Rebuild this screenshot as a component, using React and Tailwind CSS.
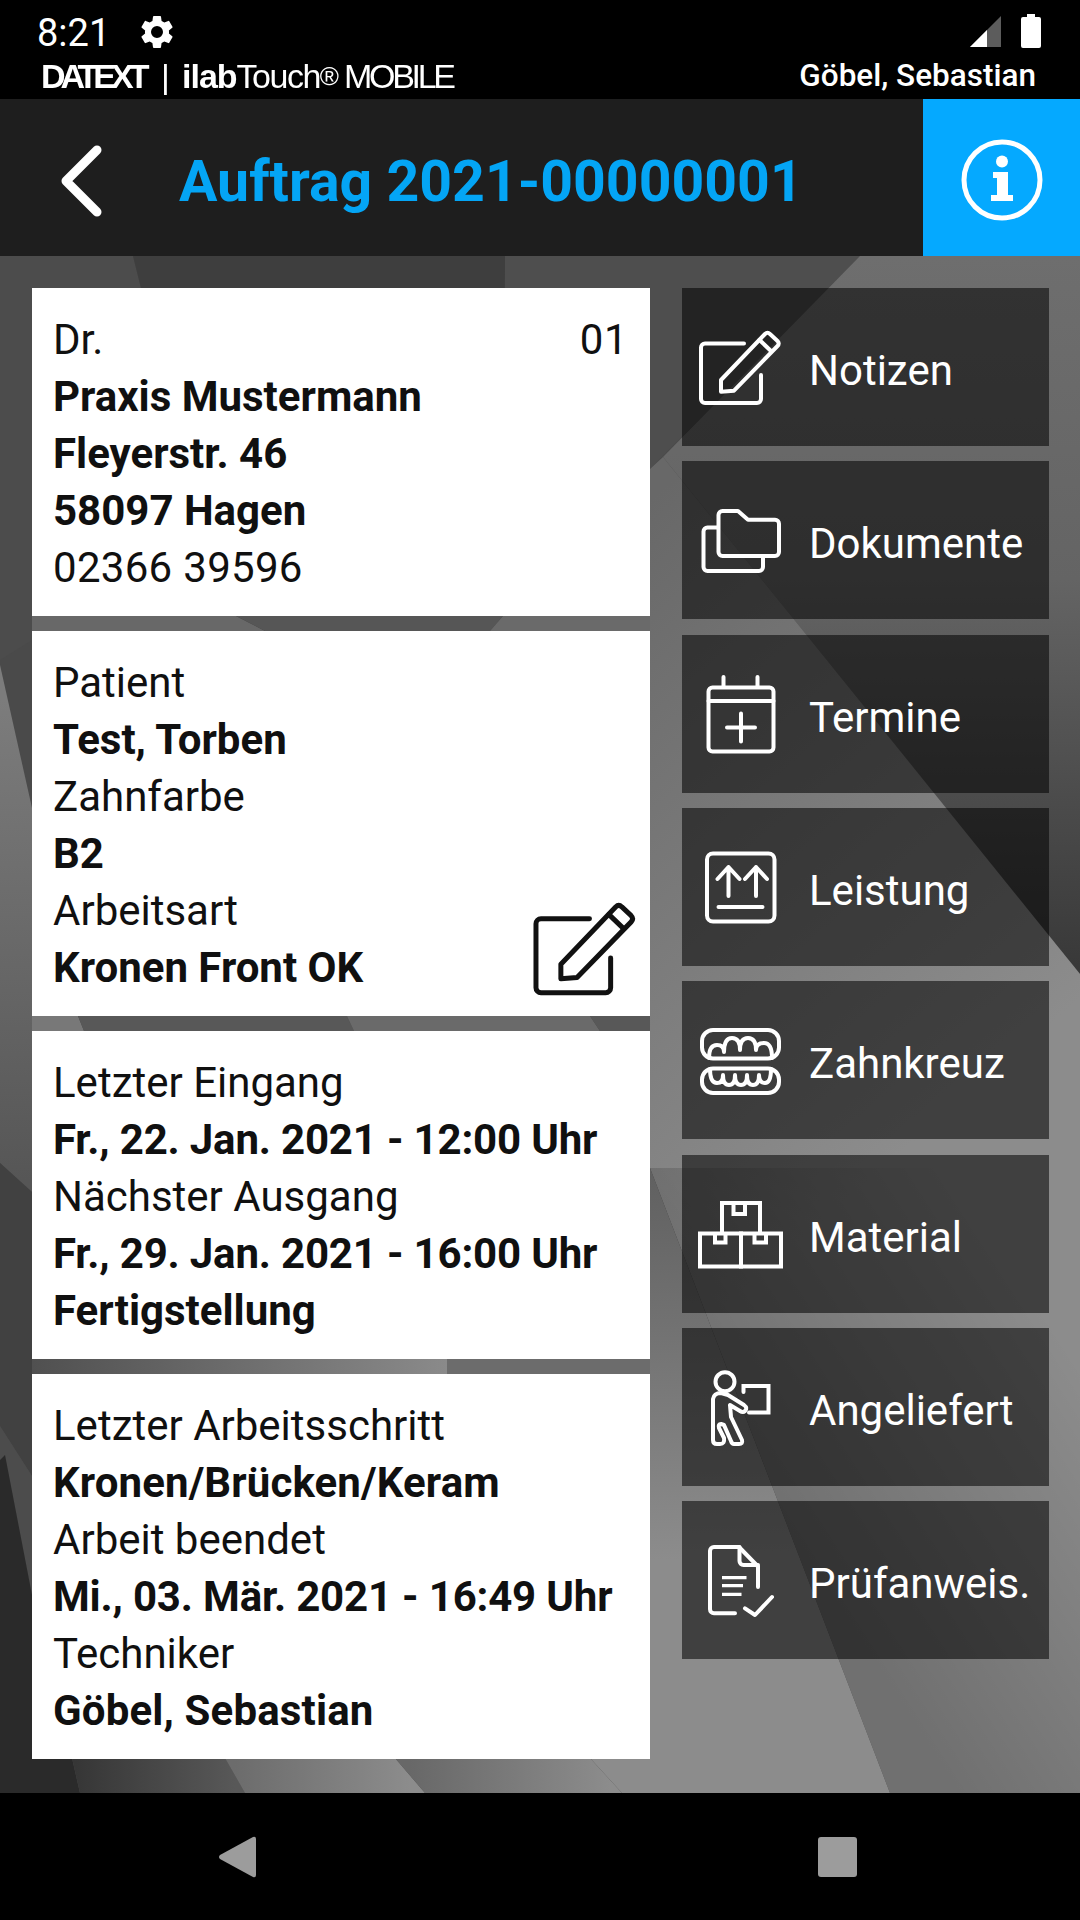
import React from 'react';

const font = { fontFamily: 'Roboto, sans-serif' };

// background picture, coordinates are page pixels minus the 256px of bars on top
const Wallpaper = () => (
  <svg className="absolute inset-0 w-full h-full" viewBox="0 256 1080 1537" preserveAspectRatio="none">
    <defs>
      <linearGradient id="gTopRight" gradientUnits="userSpaceOnUse" x1="0" y1="256" x2="0" y2="974">
        <stop offset="0" stopColor="#6e6e6e" />
        <stop offset="0.45" stopColor="#646464" />
        <stop offset="1" stopColor="#383838" />
      </linearGradient>
      <linearGradient id="gMid" gradientUnits="userSpaceOnUse" x1="650" y1="500" x2="1080" y2="1000">
        <stop offset="0" stopColor="#686868" />
        <stop offset="1" stopColor="#8c8c8c" />
      </linearGradient>
      <linearGradient id="gLow" gradientUnits="userSpaceOnUse" x1="720" y1="1420" x2="1000" y2="1240">
        <stop offset="0" stopColor="#000" stopOpacity="0.2" />
        <stop offset="1" stopColor="#000" stopOpacity="0" />
      </linearGradient>
      <linearGradient id="gE" gradientUnits="userSpaceOnUse" x1="0" y1="1170" x2="0" y2="1560">
        <stop offset="0" stopColor="#606060" />
        <stop offset="1" stopColor="#8c8c8c" />
      </linearGradient>
      <linearGradient id="gWedge" gradientUnits="userSpaceOnUse" x1="0" y1="700" x2="0" y2="1180">
        <stop offset="0" stopColor="#7c7c7c" />
        <stop offset="1" stopColor="#565656" />
      </linearGradient>
      <linearGradient id="gBand1" gradientUnits="userSpaceOnUse" x1="75" y1="0" x2="235" y2="0">
        <stop offset="0" stopColor="#363636" />
        <stop offset="1" stopColor="#585858" />
      </linearGradient>
      <linearGradient id="gBand2" gradientUnits="userSpaceOnUse" x1="235" y1="0" x2="410" y2="0">
        <stop offset="0" stopColor="#6c6c6c" />
        <stop offset="1" stopColor="#8c8c8c" />
      </linearGradient>
      <linearGradient id="gBand3" gradientUnits="userSpaceOnUse" x1="410" y1="0" x2="610" y2="0">
        <stop offset="0" stopColor="#686868" />
        <stop offset="1" stopColor="#8c8c8c" />
      </linearGradient>
      <linearGradient id="gGap3" gradientUnits="userSpaceOnUse" x1="32" y1="0" x2="447" y2="0">
        <stop offset="0" stopColor="#505050" />
        <stop offset="1" stopColor="#8a8a8a" />
      </linearGradient>
    </defs>
    <rect x="0" y="256" width="1080" height="1537" fill="#4a4a4a" />
    <polygon points="0,256 133,256 141,288 236,616 32,640 0,660" fill="#4c4c4c" />
    <polygon points="133,256 505,256 529,288 503,616 490,631 265,631 236,616 141,288" fill="#3e3e3e" />
    <polygon points="505,256 860,256 650,469 650,640 503,631" fill="#4e4e4e" />
    <polygon points="860,256 1080,256 1080,974 663,457" fill="url(#gTopRight)" />
    <polygon points="663,457 1080,974 1080,1793 890,1793 650,1168 650,469" fill="url(#gMid)" />
    <polygon points="650,1168 890,1793 622,1793 590,1758 590,1374 650,1359" fill="url(#gE)" />
    <polygon points="650,1168 1080,1168 1080,1793 890,1793" fill="url(#gLow)" />
    {/* gaps between the cards */}
    <polygon points="32,616 236,616 265,631 32,631" fill="#686868" />
    <polygon points="236,616 265,631 490,631 503,616" fill="#565656" />
    <polygon points="503,616 650,616 650,631 490,631" fill="#6a6a6a" />
    <polygon points="32,1016 78,1016 84,1031 32,1031" fill="#787878" />
    <polygon points="78,1016 347,1016 354,1031 84,1031" fill="#585858" />
    <polygon points="347,1016 590,1016 600,1031 354,1031" fill="#6a6a6a" />
    <polygon points="590,1016 650,1016 650,1031 600,1031" fill="#585858" />
    <rect x="32" y="1359" width="415" height="15" fill="url(#gGap3)" />
    <rect x="447" y="1359" width="203" height="15" fill="#6c6c6c" />
    {/* left edge */}
    <polygon points="0,665 32,808 32,1192 0,1163" fill="url(#gWedge)" />
    <polygon points="0,1163 32,1192 32,1476 0,1426" fill="#414141" />
    <polygon points="0,1426 32,1476 32,1595 5,1455 0,1460" fill="#4c4c4c" />
    <polygon points="0,1460 5,1455 32,1595 72,1758 80,1793 0,1793" fill="#2a2a2a" />
    {/* strip under the last card */}
    <polygon points="72,1758 225,1758 245,1793 80,1793" fill="url(#gBand1)" />
    <polygon points="225,1758 395,1758 425,1793 245,1793" fill="url(#gBand2)" />
    <polygon points="395,1758 590,1758 622,1793 425,1793" fill="url(#gBand3)" />
  </svg>
);

const IconBox = ({ children, className = 'w-[90px] h-[90px] text-white' }) => (
  <svg viewBox="0 0 90 90" fill="none" stroke="currentColor" strokeWidth="4" strokeLinecap="round" strokeLinejoin="round" className={className}>
    {children}
  </svg>
);

const NoteIcon = ({ className }) => (
  <IconBox className={className}>
    <path d="M47 21.5H8a4 4 0 0 0-4 4V77a4 4 0 0 0 4 4h52a4 4 0 0 0 4-4V53" />
    <path d="M24 69.7V58L68 12q2.500-2.500 5 0l7.500 7q2.500 2.500 0 5L37 68.700Z" />
    <path d="M62.500 18 74 29" />
  </IconBox>
);

const FolderIcon = () => (
  <IconBox>
    <path d="M21.500 57V20a4 4 0 0 1 4-4H41l10 8.700h27a4 4 0 0 1 4 4V57a4 4 0 0 1-4 4H25.500a4 4 0 0 1-4-4Z" />
    <path d="M21 32.500H10.500a4 4 0 0 0-4 4V72a4 4 0 0 0 4 4H62a4 4 0 0 0 4-4V61" />
  </IconBox>
);

const CalendarIcon = () => (
  <IconBox>
    <rect x="11.500" y="18.500" width="65" height="64" rx="4" />
    <path d="M26.500 8v10M60.500 8v10M11.500 32h65M44 44.500v28M30 58.500h28" />
  </IconBox>
);

const UpIcon = () => (
  <IconBox>
    <rect x="10" y="11.500" width="67.500" height="68" rx="6" />
    <path d="M31.500 54V25M20.500 37l11-12 11 12M59 54V25M48 37l11-12 11 12M21.500 65h44" />
  </IconBox>
);

const TeethIcon = () => (
  <IconBox>
    <rect x="5" y="15" width="77" height="28.500" rx="11" />
    <rect x="5" y="53.500" width="77" height="24.500" rx="11" />
    <path d="M12 43Q12 30 20 30 27 30 27 37 27 23 35 23 43 23 43 35 43 23 51 23 59 23 59 35 59 28 67 28 75 28 75 43" />
    <path d="M13 54Q13 68 20 68 26 68 26 60 26 70 32 70 38 70 38 60 38 70 44 70 50 70 50 60 50 70 56 70 62 70 62 60 62 68 68 68 74 68 74 54" />
  </IconBox>
);

const BoxesIcon = () => (
  <IconBox>
    <g strokeLinecap="butt" strokeLinejoin="miter">
      <path d="M25 44.500V14h38v30.500" />
      <path d="M36.500 14v11h11.500V14" />
      <rect x="3" y="44.500" width="41" height="33" />
      <rect x="44" y="44.500" width="40" height="33" />
      <path d="M18 44.500v9h10.500v-9M57.500 44.500v9H69v-9" />
    </g>
  </IconBox>
);

const CarryIcon = () => (
  <IconBox>
    <circle cx="28" cy="19.700" r="9.500" />
    <path d="M24 31l7 2 16 10q4 3 1 6-2 2-5 0l-10-6 1 12 11 23q1 4-3 4h-5q-2 0-3-3l-7-16-3-1q-3 0-2 4l5 10q1 6-4 6h-3q-4 0-4-4V37q1-6 8-6Z" />
    <path d="M46.500 30v-6h25v26.500H52" strokeLinejoin="miter" />
  </IconBox>
);

const DocCheckIcon = () => (
  <IconBox>
    <path d="M38 78.300H17a4 4 0 0 1-4-4V16a4 4 0 0 1 4-4h25l19 19.500V52" />
    <path d="M42.500 12v14a4 4 0 0 0 4 4H61" />
    <path d="M25 42.700h24.500M25 50.700h21M25 59.300h19.500" strokeWidth="3.200" strokeLinecap="butt" />
    <path d="M48 73.300 58 80l17-18" />
  </IconBox>
);

const MENU = [
  { label: 'Notizen', Icon: NoteIcon },
  { label: 'Dokumente', Icon: FolderIcon },
  { label: 'Termine', Icon: CalendarIcon },
  { label: 'Leistung', Icon: UpIcon },
  { label: 'Zahnkreuz', Icon: TeethIcon },
  { label: 'Material', Icon: BoxesIcon },
  { label: 'Angeliefert', Icon: CarryIcon },
  { label: 'Prüfanweis.', Icon: DocCheckIcon },
];

const Line = ({ b, children, className = '' }) => (
  <div className={`h-[57px] leading-[57px] whitespace-nowrap ${b ? 'font-bold' : 'font-normal'} ${className}`}>{children}</div>
);

const Card = ({ lines, children }) => (
  <div className="relative bg-white pl-[21px] pr-[22px] pt-[23px] pb-[20px] text-[42px] text-[#101010]">
    {lines.map(([text, b, cls], i) => (
      <Line key={i} b={b} className={cls}>{text}</Line>
    ))}
    {children}
  </div>
);

const App = () => {
  return (
    <div className="w-[1080px] h-[1920px] flex flex-col bg-black overflow-hidden" style={font}>
      {/* status bar */}
      <div className="h-[99px] bg-black text-white">
        <div className="h-[58px] flex items-center pl-[37px] pr-[38px] pt-[4px]">
          <span className="text-[38px] leading-none mt-[4px]">8:21</span>
          <svg viewBox="0 0 24 24" fill="currentColor" className="w-[40px] h-[40px] ml-[27px] mt-[2px]">
            <path d="M19.140 12.940c.04-.3.060-.61.060-.94 0-.32-.02-.64-.07-.94l2.030-1.580a.49.49 0 0 0 .12-.61l-1.920-3.320a.488.488 0 0 0-.59-.22l-2.390.96c-.5-.38-1.030-.7-1.620-.94l-.36-2.540a.484.484 0 0 0-.48-.41h-3.840c-.24 0-.43.170-.47.410l-.36 2.540c-.59.240-1.130.570-1.620.940l-2.390-.96c-.22-.08-.47 0-.59.220L2.740 8.870c-.12.210-.08.470.12.610l2.030 1.580c-.05.300-.09.630-.09.940s.02.640.07.940l-2.030 1.580a.49.49 0 0 0-.12.610l1.920 3.320c.12.220.37.290.59.220l2.390-.96c.5.380 1.030.7 1.620.940l.36 2.540c.05.240.24.410.48.410h3.840c.24 0 .44-.17.47-.41l.36-2.540c.59-.24 1.130-.56 1.620-.94l2.390.96c.22.080.47 0 .59-.22l1.920-3.320c.12-.22.070-.47-.12-.61l-2.010-1.580zM12 15.600A3.610 3.610 0 0 1 8.400 12 3.610 3.610 0 0 1 12 8.400a3.610 3.610 0 0 1 3.600 3.600 3.610 3.610 0 0 1-3.600 3.600z" />
          </svg>
          <div className="ml-auto flex items-center gap-[20px] mr-[1px]">
            <svg viewBox="0 0 31 31" className="w-[31px] h-[31px]">
              <polygon points="0,31 31,0 31,31" fill="#5c5c5c" />
              <polygon points="0,31 17,14 17,31" fill="#fff" />
            </svg>
            <svg viewBox="0 0 20 34" className="w-[20px] h-[34px]">
              <path d="M6 0h8v3h4a2 2 0 0 1 2 2v27a2 2 0 0 1-2 2H2a2 2 0 0 1-2-2V5a2 2 0 0 1 2-2h4Z" fill="#fff" />
            </svg>
          </div>
        </div>
        <div className="h-[41px] flex items-start pl-[41px] pr-[44px]">
          <div className="flex items-baseline h-[36px] text-[34px] leading-[36px] whitespace-nowrap blur-[0.5px]" style={{ fontFamily: '"Liberation Sans", sans-serif' }}>
            <span className="font-bold tracking-[-5px] w-[112px]">DATEXT</span>
            <span className="ml-[8px] w-[14px] font-normal">|</span>
            <span className="ml-[7px] font-bold tracking-[-1px]">ilab</span>
            <span className="tracking-[-1.500px]">Touch</span>
            <span className="text-[26px] self-start tracking-[-1px]">®</span>
            <span className="ml-[6px] tracking-[-3.300px]">MOBILE</span>
          </div>
          <span className="ml-auto text-[31.500px] leading-[36px] font-medium">Göbel, Sebastian</span>
        </div>
      </div>

      {/* title bar */}
      <div className="h-[157px] flex items-center bg-[#1e1e1e]">
        <svg viewBox="0 0 50 76" fill="none" stroke="#fff" strokeWidth="9" strokeLinecap="round" strokeLinejoin="round" className="w-[50px] h-[76px] ml-[56px] mt-[5px]">
          <path d="M41 8 10 39l31 31" />
        </svg>
        <h1 className="ml-[73px] mt-[8px] text-[57.200px] font-bold text-[#04a5f5] whitespace-nowrap">Auftrag 2021-00000001</h1>
        <div className="ml-auto w-[157px] h-full bg-[#05a9ff] flex items-center justify-center pt-[4px]">
          <svg viewBox="0 0 84 84" fill="none" className="w-[84px] h-[84px]">
            <circle cx="42" cy="42" r="38" stroke="#fff" strokeWidth="5" />
            <circle cx="42" cy="23.500" r="6" fill="#fff" />
            <path d="M33 34h15v23h5v6H31v-6h6V40h-4Z" fill="#fff" />
          </svg>
        </div>
      </div>

      {/* content */}
      <div className="relative h-[1537px] flex gap-[32px] pl-[32px] pt-[32px]">
        <Wallpaper />
        <div className="relative w-[618px] flex flex-col gap-[15px]">
          <Card lines={[['Dr.'], ['Praxis Mustermann', 1], ['Fleyerstr. 46', 1], ['58097 Hagen', 1], ['02366 39596', 0, 'tracking-[0.300px]']]}>
            <span className="absolute right-[22px] top-[23px] leading-[57px] tracking-[0.500px]">01</span>
          </Card>
          <Card lines={[['Patient'], ['Test, Torben', 1], ['Zahnfarbe'], ['B2', 1], ['Arbeitsart'], ['Kronen Front OK', 1]]}>
            <div className="absolute right-[7px] bottom-[12px]">
              <NoteIcon className="w-[112px] h-[112px] text-[#111]" />
            </div>
          </Card>
          <Card lines={[['Letzter Eingang'], ['Fr., 22. Jan. 2021 - 12:00 Uhr', 1, 'tracking-[-0.180px]'], ['Nächster Ausgang'], ['Fr., 29. Jan. 2021 - 16:00 Uhr', 1, 'tracking-[-0.180px]'], ['Fertigstellung', 1]]} />
          <Card lines={[['Letzter Arbeitsschritt'], ['Kronen/Brücken/Keram', 1, 'tracking-[0.120px]'], ['Arbeit beendet'], ['Mi., 03. Mär. 2021 - 16:49 Uhr', 1, 'tracking-[-0.180px]'], ['Techniker'], ['Göbel, Sebastian', 1, 'tracking-[0.150px]']]} />
        </div>
        <div className="relative w-[367px] flex flex-col gap-[15.330px]">
          {MENU.map(({ label, Icon }) => (
            <div key={label} className="h-[158px] flex items-center bg-black/[0.54] pl-[15px]">
              <Icon />
              <span className="ml-[22px] pt-[7px] text-[42px] text-white whitespace-nowrap">{label}</span>
            </div>
          ))}
        </div>
      </div>

      {/* nav bar */}
      <div className="h-[127px] flex items-center pl-[219px] bg-black">
        <svg viewBox="0 0 37 42" className="w-[37px] h-[42px]">
          <path d="M34 1 1 19q-2 2 0 4l33 18q3 1 3-2V3q0-3-3-2Z" fill="#9c9c9c" />
        </svg>
        <div className="ml-[562px] w-[39px] h-[40px] rounded-[3px] bg-[#9c9c9c]" />
      </div>
    </div>
  );
};

export default App;
